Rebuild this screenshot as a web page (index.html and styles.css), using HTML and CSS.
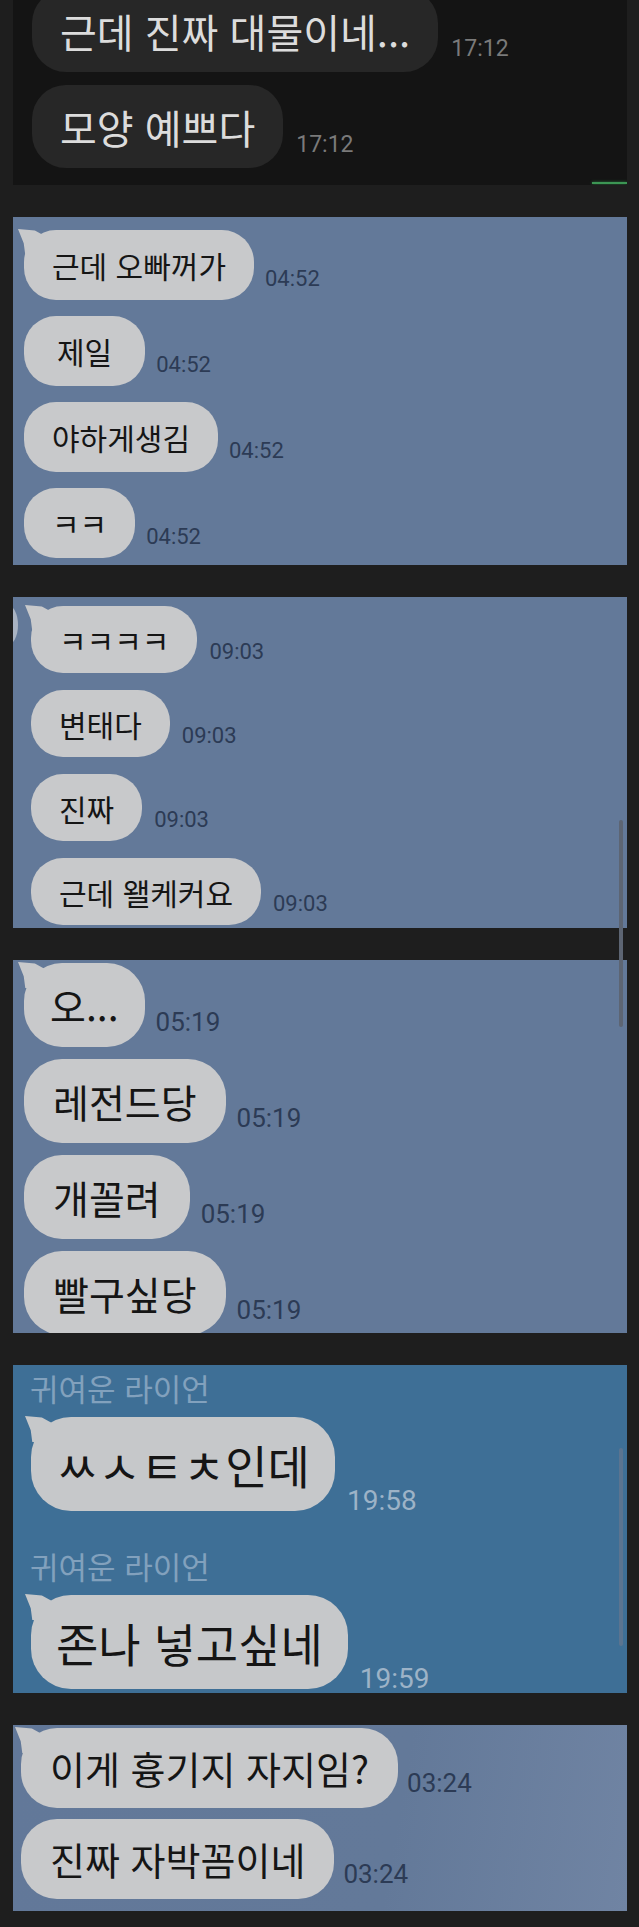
FILE: index.html
```html
<!DOCTYPE html>
<html lang="ko">
<head>
<meta charset="utf-8">
<title>chat</title>
<link rel="stylesheet" href="styles.css">
</head>
<body>
<div class="page">
  <section class="panel p1">
    <div class="row first"><div class="bubble">근데 진짜 대물이네...</div><span class="time">17:12</span></div>
    <div class="row"><div class="bubble">모양 예쁘다</div><span class="time">17:12</span></div>
    <div class="green"></div>
  </section>

  <section class="panel p2">
    <div class="row"><div class="bubble tail">근데 오빠꺼가</div><span class="time">04:52</span></div>
    <div class="row"><div class="bubble wide">제일</div><span class="time">04:52</span></div>
    <div class="row"><div class="bubble">야하게생김</div><span class="time">04:52</span></div>
    <div class="row"><div class="bubble">ㅋㅋ</div><span class="time">04:52</span></div>
  </section>

  <section class="panel p3">
    <div class="peek"></div>
    <div class="row"><div class="bubble tail">ㅋㅋㅋㅋ</div><span class="time">09:03</span></div>
    <div class="row"><div class="bubble">변태다</div><span class="time">09:03</span></div>
    <div class="row"><div class="bubble">진짜</div><span class="time">09:03</span></div>
    <div class="row"><div class="bubble">근데 왤케커요</div><span class="time">09:03</span></div>
  </section>

  <section class="panel p4">
    <div class="row"><div class="bubble tail short">오...</div><span class="time">05:19</span></div>
    <div class="row"><div class="bubble">레전드당</div><span class="time">05:19</span></div>
    <div class="row"><div class="bubble">개꼴려</div><span class="time">05:19</span></div>
    <div class="row"><div class="bubble">빨구싶당</div><span class="time">05:19</span></div>
  </section>

  <section class="panel p5">
    <div class="name">귀여운 라이언</div>
    <div class="row"><div class="bubble tail">ㅆㅅㅌㅊ인데</div><span class="time">19:58</span></div>
    <div class="name second">귀여운 라이언</div>
    <div class="row"><div class="bubble tail">존나 넣고싶네</div><span class="time">19:59</span></div>
  </section>

  <section class="panel p6">
    <div class="row"><div class="bubble tail">이게 흉기지 자지임?</div><span class="time">03:24</span></div>
    <div class="row"><div class="bubble">진짜 자박꼼이네</div><span class="time">03:24</span></div>
  </section>

  <div class="scroll s1"></div>
  <div class="scroll s2"></div>
</div>
</body>
</html>
```

FILE: styles.css
```css
*, *::before, *::after {
  box-sizing: border-box;
}
html, body {
  margin: 0;
  padding: 0;
}
body {
  background: #1e1e1e;
  width: 639px;
  height: 1927px;
  overflow: hidden;
  font-family: "Noto Sans CJK KR", "Noto Sans", sans-serif;
}
.page {
  position: relative;
  padding: 0 12px 0 13px;
  display: flex;
  flex-direction: column;
  gap: 32px;
}
.panel {
  position: relative;
  overflow: hidden;
  display: flex;
  flex-direction: column;
  align-items: flex-start;
  flex-shrink: 0;
  background: #637999;
}
.row {
  display: flex;
  align-items: flex-end;
  flex-shrink: 0;
}
.bubble {
  position: relative;
  display: flex;
  align-items: center;
  white-space: nowrap;
  line-height: 1;
  background: #c8c9cb;
  color: #151515;
  flex-shrink: 0;
}
.bubble.tail::before {
  content: "";
  position: absolute;
  left: -6px;
  top: -1px;
  width: 26px;
  height: 26px;
  background: inherit;
  clip-path: polygon(0 0, 65% 6%, 100% 25%, 100% 100%, 28% 100%, 22% 55%);
}
.time {
  font-family: Roboto, "Noto Sans", sans-serif;
  line-height: 1;
  color: #2c3b55;
  white-space: nowrap;
}

/* panel 1 : dark */
.p1 {
  height: 185px;
  background: #141414;
  padding-left: 19px;
  gap: 13px;
}
.p1 .first { margin-top: -11px; }
.p1 .bubble {
  height: 83px;
  padding: 0 28px;
  border-radius: 34px;
  font-size: 40px;
  background: #272727;
  color: #dcdcdc;
}
.p1 .time {
  font-size: 23px;
  color: #7a7a7a;
  margin: 0 0 12px 13px;
}
.green {
  position: absolute;
  right: 0;
  bottom: 1px;
  width: 35px;
  height: 2px;
  background: #3c9654;
  box-shadow: 0 0 3px #2e7a44;
}

/* panel 2 */
.p2 {
  height: 348px;
  padding: 13px 0 0 11px;
  gap: 16px;
}
.p2 .bubble {
  height: 70px;
  padding: 0 28px;
  border-radius: 32px;
  font-size: 30px;
}
.p2 .bubble.wide {
  padding: 0 33px;
}
.p2 .time {
  font-size: 22px;
  margin: 0 0 10px 11px;
}

/* panel 3 */
.p3 {
  height: 331px;
  padding: 9px 0 0 18px;
  gap: 17px;
}
.p3 .bubble {
  height: 67px;
  padding: 0 28px;
  border-radius: 32px;
  font-size: 30px;
}
.p3 .time {
  font-size: 22px;
  margin: 0 0 10px 12px;
}
.peek {
  position: absolute;
  left: -16px;
  top: 8px;
  width: 21px;
  height: 40px;
  border-radius: 50%;
  background: #a9b3c3;
}

/* panel 4 */
.p4 {
  height: 373px;
  padding: 3px 0 0 11px;
  gap: 12px;
}
.p4 .bubble {
  height: 84px;
  padding: 0 29px;
  border-radius: 38px;
  font-size: 39px;
}
.p4 .bubble.short {
  padding: 0 26px;
}
.p4 .time {
  font-size: 26px;
  margin: 0 0 12px 11px;
}

/* panel 5 */
.p5 {
  height: 328px;
  padding: 0 0 0 18px;
  background: #3e6f96;
}
.name {
  font-size: 31px;
  line-height: 45px;
  color: #82a1bd;
  margin: 0 0 7px -1px;
}
.name.second { margin-top: 32px; }
.p5 .bubble {
  height: 94px;
  padding: 0 25px;
  border-radius: 40px;
  font-size: 46px;
  background: #c6c8ca;
}
.p5 .time {
  font-size: 28px;
  color: #9db3c7;
  margin: 0 0 -4px 12px;
}

/* panel 6 */
.p6 {
  height: 186px;
  padding: 3px 0 0 8px;
  gap: 11px;
  background: linear-gradient(100deg, #627899 0%, #637999 62%, #7084a3 100%);
}
.p6 .bubble {
  height: 80px;
  padding: 0 29px;
  border-radius: 36px;
  font-size: 38px;
}
.p6 .time {
  font-size: 26px;
  margin: 0 0 12px 9px;
}

/* scroll indicators overlaying panels */
.scroll {
  position: absolute;
  left: 619px;
  width: 4px;
  border-radius: 2px;
  background: #5d6573;
}
.s1 { top: 820px; height: 207px; }
.s2 { top: 1448px; height: 198px; background: #5b7490; }
```
